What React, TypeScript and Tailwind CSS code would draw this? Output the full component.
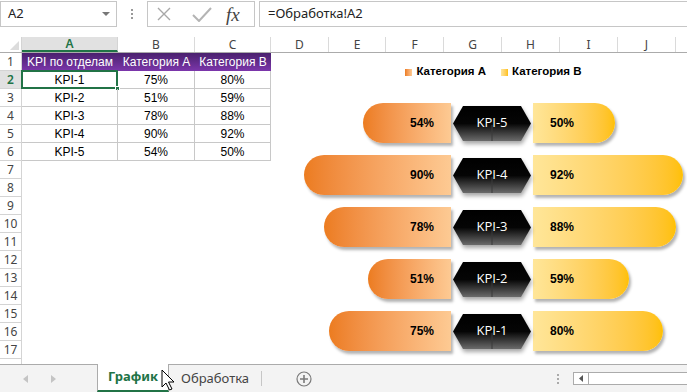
import React from 'react';

type Col = { l: string; w: string };

const cols: Col[] = [
  { l: 'A', w: 'w-[96px]' },
  { l: 'B', w: 'w-[77px]' },
  { l: 'C', w: 'w-[76px]' },
  { l: 'D', w: 'w-[58px]' },
  { l: 'E', w: 'w-[57px]' },
  { l: 'F', w: 'w-[58px]' },
  { l: 'G', w: 'w-[58px]' },
  { l: 'H', w: 'w-[58px]' },
  { l: 'I', w: 'w-[58px]' },
  { l: 'J', w: 'w-[58px]' },
  { l: '', w: 'w-[40px]' },
];

const data = [
  { kpi: 'KPI-1', a: 75, b: 80 },
  { kpi: 'KPI-2', a: 51, b: 59 },
  { kpi: 'KPI-3', a: 78, b: 88 },
  { kpi: 'KPI-4', a: 90, b: 92 },
  { kpi: 'KPI-5', a: 54, b: 50 },
];

const PX_PER_PCT = 1.63;
const cellFont = { fontFamily: '"Liberation Sans", Arial, sans-serif' };

function FormulaBar() {
  return (
    <div className="flex h-[28px] items-stretch bg-white text-[13px] text-[#222]" style={{ fontFamily: '"Noto Sans", "Open Sans", sans-serif' }}>
      <div className="mt-px mb-[1px] flex w-[117px] items-center justify-between border border-[#c6c6c6] pl-[7px] pr-[6px]">
        <span>A2</span>
        <svg width="8" height="5" viewBox="0 0 8 5"><path d="M0 0 L8 0 L4 4 Z" fill="#777" /></svg>
      </div>
      <div className="flex w-[30px] flex-col items-center justify-center gap-[2px]">
        <span className="h-[2px] w-[2px] bg-[#999]" />
        <span className="h-[2px] w-[2px] bg-[#999]" />
        <span className="h-[2px] w-[2px] bg-[#999]" />
      </div>
      <div className="mt-px mb-[1px] flex w-[108px] items-center border border-[#c6c6c6]">
        <svg className="ml-[9px]" width="14" height="14" viewBox="0 0 14 14">
          <path d="M1 1 L13 13 M13 1 L1 13" stroke="#a8a8a8" strokeWidth="1.4" />
        </svg>
        <svg className="ml-[21px]" width="20" height="15" viewBox="0 0 20 15">
          <path d="M1 8 L7 14 L19 1" stroke="#b4b4b4" strokeWidth="2" fill="none" />
        </svg>
        <span className="ml-[14px] text-[19px] italic leading-none text-[#444]" style={{ fontFamily: '"Liberation Serif", serif' }}>fx</span>
      </div>
      <div className="mt-px mb-[1px] ml-[4px] flex flex-1 items-center border border-r-0 border-[#c6c6c6] pl-[8px]">
        =Обработка!A2
      </div>
    </div>
  );
}

function ColumnHeaders() {
  return (
    <div className="flex h-[16px] border-b border-[#ababab] bg-white text-[12px] text-[#444]" style={{ fontFamily: '"Noto Sans", "Open Sans", sans-serif' }}>
      <div className="relative w-[22px] shrink-0 border-r border-[#d4d4d4]">
        <svg className="absolute bottom-[2px] right-[2px]" width="9" height="9" viewBox="0 0 9 9"><path d="M9 0 L9 9 L0 9 Z" fill="#dcdcdc" /></svg>
      </div>
      {cols.map((c, i) => (
        <div
          key={i}
          className={`${c.w} flex shrink-0 items-center justify-center leading-none ${
            c.l === 'A'
              ? 'border-b-2 border-r border-b-[#217346] border-r-[#d4d4d4] bg-[#e1e1e1] font-semibold text-[#217346]'
              : 'border-r border-[#dadada]'
          }`}
        >
          {c.l}
        </div>
      ))}
    </div>
  );
}

function RowHeader({ n }: { n: number }) {
  const sel = n === 2;
  return (
    <div
      className={`flex h-[18px] w-[22px] shrink-0 items-center justify-center border-b border-r text-[12px] leading-none ${
        sel ? 'border-b-[#d4d4d4] border-r-[#217346] bg-[#e1e1e1] font-semibold text-[#217346]' : 'border-[#d4d4d4] text-[#444]'
      }`}
      style={{ fontFamily: '"Noto Sans", "Open Sans", sans-serif' }}
    >
      {n <= 17 ? n : ''}
    </div>
  );
}

function SheetGrid() {
  const rows = Array.from({ length: 18 }, (_, i) => i + 1);
  return (
    <div className="h-[311px] overflow-hidden bg-white">
      {rows.map((r) => {
        const item = r >= 2 && r <= 6 ? data[r - 2] : null;
        return (
          <div key={r} className="flex h-[18px]">
            <RowHeader n={r} />
            {r === 1 && (
              <div className="flex h-[18px] bg-linear-to-b from-[#4a216e] to-[#7c36ab] text-[12px] text-white" style={cellFont}>
                <div className="flex w-[96px] items-center justify-center">KPI по отделам</div>
                <div className="flex w-[77px] items-center justify-center">Категория А</div>
                <div className="flex w-[76px] items-center justify-center">Категория В</div>
              </div>
            )}
            {item && (
              <div className="flex text-[12px] text-black" style={cellFont}>
                <div className="relative flex h-[18px] w-[96px] items-center justify-center border-b border-r border-[#c8c8c8]">
                  {item.kpi}
                  {r === 2 && (
                    <>
                      <div className="absolute -left-px -top-px h-[19px] w-[97px] border-2 border-[#217346]" />
                      <div className="absolute -bottom-[3px] -right-[3px] h-[5px] w-[5px] border border-white bg-[#217346]" />
                    </>
                  )}
                </div>
                <div className="flex h-[18px] w-[77px] items-center justify-center border-b border-r border-[#c8c8c8]">{item.a}%</div>
                <div className="flex h-[18px] w-[76px] items-center justify-center border-b border-r border-[#c8c8c8]">{item.b}%</div>
              </div>
            )}
          </div>
        );
      })}
    </div>
  );
}

function Hexagon({ label, id }: { label: string; id: string }) {
  return (
    <div className="relative ml-[2px] flex h-[35px] w-[78px] shrink-0 items-center justify-center">
      <svg className="absolute inset-0" width="78" height="35" viewBox="0 0 78 35" style={{ filter: 'drop-shadow(1px 3px 2px rgba(0,0,0,0.35))' }}>
        <defs>
          <linearGradient id={id} x1="0" y1="0" x2="0" y2="1">
            <stop offset="0" stopColor="#000" />
            <stop offset="0.5" stopColor="#050505" />
            <stop offset="1" stopColor="#6b6b6b" />
          </linearGradient>
        </defs>
        <polygon points="0,17.5 10,0 68,0 78,17.5 68,35 10,35" fill={`url(#${id})`} />
        <line x1="39" y1="19" x2="39" y2="35" stroke="#3a3a3a" strokeWidth="1" />
      </svg>
      <span className="relative text-[13px] text-white" style={{ fontFamily: '"Open Sans", sans-serif' }}>{label}</span>
    </div>
  );
}

function Chart() {
  const rows = [...data].reverse();
  return (
    <div className="absolute left-[300px] top-[62px] w-[387px]" style={cellFont}>
      <div className="flex h-[20px] items-center justify-center text-[11.5px] font-bold text-black">
        <span className="mr-[4px] h-[7px] w-[7px] bg-linear-to-r from-[#ec7c1f] to-[#fdca93]" />
        <span>Категория А</span>
        <span className="ml-[15px] mr-[4px] h-[7px] w-[7px] bg-linear-to-r from-[#ffe699] to-[#ffc000]" />
        <span>Категория В</span>
      </div>
      <div className="mt-[21px] flex flex-col gap-[12px]">
        {rows.map((d) => (
          <div key={d.kpi} className="flex h-[40px] items-center">
            <div className="flex w-[151px] shrink-0 justify-end">
              <div
                className="flex h-[40px] items-center justify-end rounded-l-[20px] bg-linear-to-r from-[#ec7c1f] to-[#fdca93] pr-[17px] text-[12px] font-bold text-black shadow-[2px_3px_3px_rgba(0,0,0,0.3)]"
                style={{ width: Math.round(d.a * PX_PER_PCT) }}
              >
                {d.a}%
              </div>
            </div>
            <Hexagon label={d.kpi} id={`hex-${d.kpi}`} />
            <div
              className="ml-[2px] flex h-[40px] items-center rounded-r-[20px] bg-linear-to-r from-[#ffe699] to-[#ffc000] pl-[17px] text-[12px] font-bold text-black shadow-[2px_3px_3px_rgba(0,0,0,0.3)]"
              style={{ width: Math.round(d.b * PX_PER_PCT) }}
            >
              {d.b}%
            </div>
          </div>
        ))}
      </div>
    </div>
  );
}

function TabBar() {
  return (
    <div className="relative flex h-[28px] border-t border-[#ababab] bg-[#f3f3f3] text-[13px] text-[#444]" style={{ fontFamily: '"Noto Sans", "Open Sans", sans-serif' }}>
      <div className="flex w-[97px] items-center pl-[23px]">
        <svg width="5" height="8" viewBox="0 0 5 8"><path d="M5 0 L5 8 L0 4 Z" fill="#c4c4c4" /></svg>
        <svg className="ml-[23px]" width="5" height="8" viewBox="0 0 5 8"><path d="M0 0 L0 8 L5 4 Z" fill="#c4c4c4" /></svg>
      </div>
      <div className="-mt-px flex w-[72px] items-center justify-center border-x border-b-2 border-x-[#ababab] border-b-[#217346] bg-white font-bold text-[#217346]">
        График
      </div>
      <div className="flex items-center pl-[12px]">Обработка</div>
      <div className="ml-[12px] my-[6px] w-px bg-[#c6c6c6]" />
      <div className="ml-[34px] flex items-center">
        <svg width="16" height="16" viewBox="0 0 16 16">
          <circle cx="8" cy="8" r="7" stroke="#7a7a7a" strokeWidth="1.2" fill="none" />
          <path d="M8 4 V12 M4 8 H12" stroke="#7a7a7a" strokeWidth="1.6" />
        </svg>
      </div>
      <div className="ml-[245px] flex flex-col justify-center gap-[2px]">
        <span className="h-[2px] w-[2px] bg-[#aaa]" />
        <span className="h-[2px] w-[2px] bg-[#aaa]" />
        <span className="h-[2px] w-[2px] bg-[#aaa]" />
      </div>
      <div className="ml-[14px] my-[7px] flex flex-1 border border-r-0 border-[#ababab] bg-white">
        <div className="flex w-[15px] items-center justify-center border-r border-[#ababab]">
          <svg width="4" height="7" viewBox="0 0 4 7"><path d="M4 0 L4 7 L0 3.5 Z" fill="#555" /></svg>
        </div>
      </div>
      <svg className="absolute left-[161px] top-[4px]" width="14" height="22" viewBox="0 0 14 22">
        <path d="M1 1 L1 18 L5 14 L8.5 21 L11 20 L7.5 13 L13 13 Z" fill="#fff" stroke="#000" strokeWidth="1" strokeLinejoin="round" />
      </svg>
    </div>
  );
}

export default function App() {
  return (
    <div className="relative h-[392px] w-[687px] overflow-hidden bg-white">
      <FormulaBar />
      <div className="h-[9px]" />
      <ColumnHeaders />
      <SheetGrid />
      <TabBar />
      <Chart />
    </div>
  );
}
